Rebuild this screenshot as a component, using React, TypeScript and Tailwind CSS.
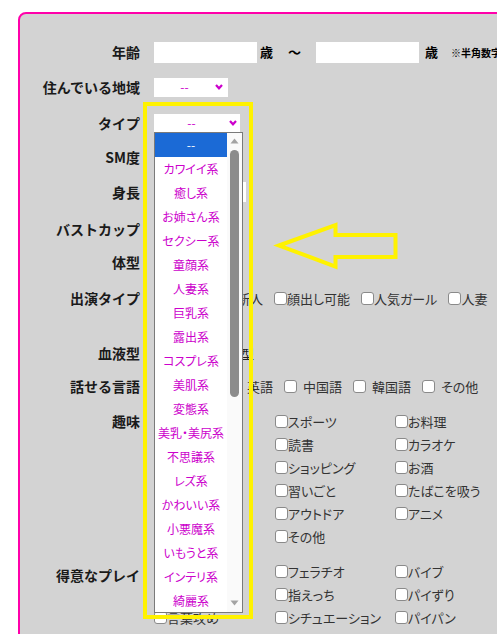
import type { ReactNode } from 'react';

const TYPES = [
  '--',
  'カワイイ系',
  '癒し系',
  'お姉さん系',
  'セクシー系',
  '童顔系',
  '人妻系',
  '巨乳系',
  '露出系',
  'コスプレ系',
  '美肌系',
  '変態系',
  '美乳・美尻系',
  '不思議系',
  'レズ系',
  'かわいい系',
  '小悪魔系',
  'いもうと系',
  'インテリ系',
  '綺麗系',
];

const HOBBIES = [
  '映画鑑賞', 'スポーツ', 'お料理',
  '音楽鑑賞', '読書', 'カラオケ',
  '旅行', 'ショッピング', 'お酒',
  'ゲーム', '習いごと', 'たばこを吸う',
  'ドライブ', 'アウトドア', 'アニメ',
  '美容', 'その他',
];

const PLAYS = [
  'キス', 'フェラチオ', 'バイブ',
  'ローター', '指えっち', 'パイずり',
  '言葉攻め', 'シチュエーション', 'パイパン',
];

function Row({ label, h, children }: { label: string; h: string; children?: ReactNode }) {
  return (
    <div className={`flex items-center ${h}`}>
      <div className="w-[120px] shrink-0 text-right text-[14px] font-bold leading-none text-[#1a1a1a] [font-feature-settings:normal]">
        {label}
      </div>
      <div className="ml-[14px] flex items-center">{children}</div>
    </div>
  );
}

function Chevron() {
  return (
    <svg width="8" height="6" viewBox="0 0 8 6">
      <path d="M1 1 L4 4.3 L7 1" fill="none" stroke="#cc00cc" strokeWidth="2.2" />
    </svg>
  );
}

function Box() {
  return <span className="inline-block w-[13px] h-[13px] shrink-0 rounded-[3px] border border-[#8a8a8a] bg-white" />;
}

function Check({ text, gap = '' }: { text: string; gap?: string }) {
  return (
    <span className="flex items-center text-[13px] leading-none text-[#333]">
      <Box />
      <span className={`whitespace-nowrap ${gap}`}>{text}</span>
    </span>
  );
}

function CheckGrid({ items }: { items: string[] }) {
  return (
    <div className="grid grid-cols-[121px_120px_120px]">
      {items.map((t) => (
        <div key={t} className="flex h-[23px] items-center">
          <Check text={t} />
        </div>
      ))}
    </div>
  );
}

export default function App() {
  return (
    <div className="relative h-[634px] w-[497px] overflow-hidden bg-white font-['Noto_Sans_CJK_JP','Noto_Sans',sans-serif] [font-feature-settings:'palt']">
      <div className="ml-[18px] mt-[12px] h-[700px] w-[540px] rounded-[8px] border-2 border-[#ff00aa] bg-[#d3d3d3] pt-[20px]">
        <Row label="年齢" h="h-[36px]">
          <div className="h-[21px] w-[103px] bg-white" />
          <span className="ml-[3px] text-[13px] font-bold">歳</span>
          <span className="ml-[15px] text-[13px] font-bold">〜</span>
          <div className="ml-[15px] h-[21px] w-[103px] bg-white" />
          <span className="ml-[6px] text-[13px] font-bold">歳</span>
          <span className="ml-[13px] whitespace-nowrap text-[10px] font-bold">※半角数字で入力</span>
        </Row>

        <Row label="住んでいる地域" h="h-[34px]">
          <div className="flex h-[19px] w-[74px] items-center bg-white">
            <span className="flex-1 text-center text-[12px] leading-none text-[#cc00cc]">--</span>
            <span className="mr-[5px] flex"><Chevron /></span>
          </div>
        </Row>

        <Row label="タイプ" h="h-[38px]">
          <div className="relative">
            <div className="flex h-[18px] w-[86px] items-center bg-white">
              <span className="flex-1 text-center text-[12px] leading-none text-[#cc00cc]">--</span>
              <span className="mr-[3px] flex"><Chevron /></span>
            </div>
            {/* open option list */}
            <div className="absolute left-0 top-full z-10 flex h-[481px] w-[89px] border border-[#7a7a7a] bg-white">
              <div className="w-[72px]">
                {TYPES.map((t, i) => (
                  <div
                    key={t}
                    className={`flex h-[24px] items-center justify-center whitespace-nowrap text-[12px] leading-none ${
                      i === 0 ? 'bg-[#1b6ad6] text-white' : 'text-[#cc00cc]'
                    }`}
                  >
                    {t}
                  </div>
                ))}
              </div>
              <div className="flex w-[15px] flex-col items-center bg-[#fafafa]">
                <svg className="mt-[5px]" width="9" height="6" viewBox="0 0 9 6">
                  <path d="M0.5 5.5 L4.5 0.5 L8.5 5.5 Z" fill="#a3a3a3" />
                </svg>
                <div className="mt-[6px] h-[247px] w-[9px] rounded-full bg-[#8c8c8c]" />
                <div className="flex-1" />
                <svg className="mb-[6px]" width="9" height="6" viewBox="0 0 9 6">
                  <path d="M0.5 0.5 L4.5 5.5 L8.5 0.5 Z" fill="#a3a3a3" />
                </svg>
              </div>
            </div>
          </div>
        </Row>

        <Row label="SM度" h="h-[30px]">
          <div className="h-[18px] w-[80px] bg-white" />
        </Row>

        <Row label="身長" h="h-[40px]">
          <div className="h-[20px] w-[92px] bg-white" />
        </Row>

        <Row label="バストカップ" h="h-[33px]">
          <div className="h-[18px] w-[70px] bg-white" />
        </Row>

        <Row label="体型" h="h-[34px]">
          <div className="h-[18px] w-[70px] bg-white" />
        </Row>

        <div className="mb-[19px]">
          <Row label="出演タイプ" h="h-[38px]">
            <div className="flex items-center gap-[11px]">
              <span className="flex items-center text-[13px] leading-none text-[#333]">
                <Box />
                <span className="w-[46px] whitespace-nowrap">未経験</span>
              </span>
              <Check text="新人" />
              <Check text="顔出し可能" />
              <Check text="人気ガール" />
              <Check text="人妻" />
            </div>
          </Row>
        </div>

        <Row label="血液型" h="h-[34px]">
          <div className="h-[18px] w-[82px] bg-white" />
          <span className="ml-[5px] text-[13px] leading-none text-[#222]">型</span>
        </Row>

        <Row label="話せる言語" h="h-[32px]">
          <div className="flex items-center gap-[11px]">
            <span className="mr-[5px]"><Check text="日本語" gap="ml-[6px]" /></span>
            <Check text="英語" gap="ml-[6px]" />
            <Check text="中国語" gap="ml-[6px]" />
            <Check text="韓国語" gap="ml-[6px]" />
            <Check text="その他" gap="ml-[6px]" />
          </div>
        </Row>

        <div className="flex h-[158px] items-start">
          <div className="w-[120px] shrink-0 pt-[8px] text-right text-[14px] font-bold leading-[23px] text-[#1a1a1a] [font-feature-settings:normal]">
            趣味
          </div>
          <div className="ml-[14px] pt-[8px]">
            <CheckGrid items={HOBBIES} />
          </div>
        </div>

        <div className="flex items-start">
          <div className="w-[120px] shrink-0 pt-[4px] text-right text-[14px] font-bold leading-[23px] text-[#1a1a1a] [font-feature-settings:normal]">
            得意なプレイ
          </div>
          <div className="ml-[14px]">
            <CheckGrid items={PLAYS} />
          </div>
        </div>
      </div>

      {/* yellow annotation frame */}
      <div className="pointer-events-none absolute left-[143px] top-[102px] z-20 h-[517px] w-[110px] border-4 border-[#fff200]" />

      {/* yellow annotation arrow */}
      <svg className="pointer-events-none absolute left-[268px] top-[215px] z-20" width="134" height="60" viewBox="0 0 134 60">
        <polygon
          points="11,30.5 67.5,10 67.5,20 127.5,20 127.5,42 67.5,42 67.5,51.5"
          fill="none"
          stroke="#fff200"
          strokeWidth="4"
        />
      </svg>
    </div>
  );
}
